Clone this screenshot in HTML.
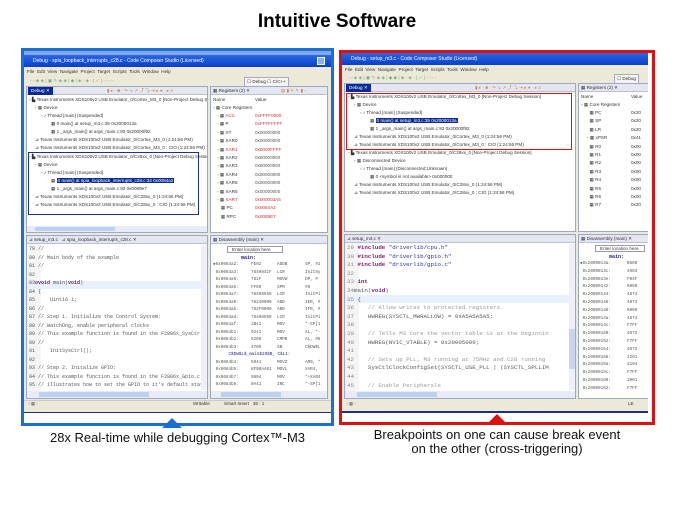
<!DOCTYPE html>
<html><head><meta charset="utf-8"><style>
*{margin:0;padding:0;box-sizing:border-box}
body{width:674px;height:506px;background:#fff;position:relative;overflow:hidden;font-family:"Liberation Sans",sans-serif}
.a{position:absolute}
.t{position:absolute;white-space:nowrap;font-size:4.6px;color:#333;line-height:8px}
.m{font-family:"Liberation Mono",monospace;font-size:5px;color:#555}
.win{position:absolute;background:#ece9d8;overflow:hidden}
.tb{position:absolute;left:0;right:0;top:0;height:12px;background:linear-gradient(#2a67e0,#0a3fc8);color:#fff;font-size:5px;line-height:12px;padding-left:9px;white-space:nowrap}
.pane{position:absolute;background:#fff;border:1px solid #9aa9c8;overflow:hidden}
.tab{position:absolute;left:0;right:0;top:0;height:8px;background:#e4e6f0;border-bottom:1px solid #b8c0d8}
.sel{background:#0a2b96;color:#fff}
.gut{position:absolute;top:8px;bottom:0;left:0;width:14px;background:#f4f4f4}
</style></head><body>
<div class="a" style="left:0;top:11px;width:674px;text-align:center;font-weight:bold;font-size:19px;color:#000">Intuitive Software</div>

<!-- LEFT -->
<div class="a" style="left:21px;top:48px;width:313px;height:378px;border:3px solid #1a6fd0"></div>
<div class="a" style="left:24px;top:51px;width:307px;height:5px;background:#7fa8e8"></div>
<div class="win" style="left:24px;top:55px;width:307px;height:358px">
 <div class="tb">Debug - spia_loopback_interrupts_c28.c - Code Composer Studio (Licensed)</div>
 <div class="a" style="right:6px;top:2px;width:8px;height:8px;background:#8ab0f0;border:1px solid #fff"></div>
 <div class="t" style="left:3px;top:13px">File&nbsp; Edit&nbsp; View&nbsp; Navigate&nbsp; Project&nbsp; Target&nbsp; Scripts&nbsp; Tools&nbsp; Window&nbsp; Help</div>
 <div class="t" style="left:6px;top:22px;color:#7a8">▫ ▫ ◈ ◈ | ▣ ✎ ◈ ◈ | ◆ | ◈ · ◈ · | ✓ | ◦ ◦ ◦ ◦</div>
 <div class="t" style="left:220px;top:22px;border:1px solid #aab;padding:0 2px;background:#f4f4f4">☐ Debug ☐ C/C++</div>
 <div class="pane" style="left:2px;top:31px;width:182px;height:147px">
  <div class="tab"><span class="t sel" style="left:1px;top:0;padding:0 3px">Debug ✕</span><span class="t" style="left:80px;top:0;color:#c84">▮ ▸ · ■ · ↷ ↘ ↗ ⤴ ⤵ ⇥ ▸ ● · ▸ ≡</span></div>
  <div class="t" style="left:2px;top:9px">▫ ▙ Texas Instruments XDS100v2 USB Emulator_0/Cortex_M3_0 [Non-Project Debug Session]</div>
  <div class="t" style="left:8px;top:17px">▫ ▦ Device</div>
  <div class="t" style="left:14px;top:25px">▫ ♪ Thread [main] (Suspended)</div>
  <div class="t" style="left:24px;top:33px">▦ 0 main() at setup_m3.c:35 0x2000013a</div>
  <div class="t" style="left:24px;top:41px">▦ 1 _args_main() at args_main.c:93 0x20000f92</div>
  <div class="t" style="left:8px;top:49px">⊿ Texas Instruments XDS100v2 USB Emulator_0/Cortex_M3_0 (1:24:56 PM)</div>
  <div class="t" style="left:8px;top:57px">⊿ Texas Instruments XDS100v2 USB Emulator_0/Cortex_M3_0 : CIO (1:24:56 PM)</div>
  <div class="a" style="left:1px;top:65px;width:171px;height:63px;border:1.5px solid #1c2f9a"></div>
  <div class="t" style="left:2px;top:66px">▫ ▙ Texas Instruments XDS100v2 USB Emulator_0/C28xx_0 [Non-Project Debug Session]</div>
  <div class="t" style="left:8px;top:74px">▫ ▦ Device</div>
  <div class="t" style="left:14px;top:82px">▫ ♪ Thread [main] (Suspended)</div>
  <div class="t" style="left:24px;top:90px">▦ <span class="sel" style="padding:0 1px">0 main() at spia_loopback_interrupts_c28.c:34 0x0084a2</span></div>
  <div class="t" style="left:24px;top:98px">▦ 1 _args_main() at args_main.c:93 0x0089e7</div>
  <div class="t" style="left:8px;top:106px">⊿ Texas Instruments XDS100v2 USB Emulator_0/C28xx_0 (1:24:56 PM)</div>
  <div class="t" style="left:8px;top:114px">⊿ Texas Instruments XDS100v2 USB Emulator_0/C28xx_0 : CIO (1:24:56 PM)</div>
  <div class="a" style="left:0;right:0;bottom:0;height:6px;background:#e8ecf6"><div class="a" style="left:8px;top:1px;width:80px;height:4px;background:#bcd0f0"></div></div>
 </div>
 <div class="pane" style="left:186px;top:31px;width:118px;height:147px">
  <div class="tab"><span class="t" style="left:2px;top:0">▦ Registers (2) ✕</span><span class="t" style="left:70px;top:0;color:#c84">▤ ▮ ✎ ✎ ▮ ▫</span></div>
  <div class="t" style="left:2px;top:9px">Name</div><div class="t" style="left:44px;top:9px">Value</div>
  <div class="t" style="left:2px;top:17px">▫ ▦ Core Registers</div>
  <div class="t" style="left:6px;top:25px;line-height:8.4px">▫ ▦ <span style="color:#c33">ACC</span><br>▫ ▦ P<br>▫ ▦ XT<br>▫ ▦ XAR0<br>▫ ▦ <span style="color:#c33">XAR1</span><br>▫ ▦ XAR2<br>▫ ▦ XAR3<br>▫ ▦ XAR4<br>▫ ▦ XAR5<br>▫ ▦ XAR6<br>▫ ▦ <span style="color:#c33">XAR7</span><br>&nbsp;&nbsp; ▦ PC<br>&nbsp;&nbsp; ▦ RPC</div>
  <div class="t" style="left:44px;top:25px;line-height:8.4px;color:#c33">0xFFFF0000<br>0xFFFFFFFF<br><span style="color:#555">0x00000000<br>0x00000000</span><br>0x0000FFFF<br><span style="color:#555">0x00000000<br>0x00000000<br>0x00000000<br>0x00000000<br>0x00000000</span><br>0x000003A5<br>0x0084A2<br>0x0089E7</div>
 </div>
 <div class="pane" style="left:2px;top:180px;width:182px;height:164px">
  <div class="tab"><span class="t" style="left:2px;top:0">⊿ setup_m3.c&nbsp;&nbsp; ⊿ spia_loopback_interrupts_c28.c ✕</span></div>
  <div class="gut"></div>
  <div class="a" style="left:0;right:0;top:45px;height:8px;background:#e8f0fc"></div>
  <div class="t m" style="left:2px;top:9px;line-height:8.5px">79 //<br>80 // Main body of the example<br>81 //<br>82<br>83<span style="color:#7a1a6a;font-weight:bold">⊖void</span> main(<span style="color:#7a1a6a;font-weight:bold">void</span>)<br>84 {<br>85&nbsp;&nbsp;&nbsp;&nbsp; Uint16 i;<br>86 //<br>87 // Step 1. Initialize the Control System:<br>88 // WatchDog, enable peripheral clocks<br>89 // This example function is found in the F2806x_SysCtrl<br>90 //<br>91&nbsp;&nbsp;&nbsp;&nbsp; InitSysCtrl();<br>92<br>93 // Step 2. Initalize GPIO:<br>94 // This example function is found in the F2806x_Gpio.c<br>95 // illustrates how to set the GPIO to it's default stat<br>96 // This example fills GP...</div>
  <div class="a" style="right:0;top:9px;width:6px;bottom:8px;background:#eef"></div>
  <div class="a" style="left:0;right:0;bottom:0;height:7px;background:#e8ecf6"><div class="a" style="left:12px;top:1px;width:110px;height:5px;background:#bcd0f0"></div></div>
 </div>
 <div class="pane" style="left:186px;top:180px;width:118px;height:164px">
  <div class="tab"><span class="t" style="left:2px;top:0">▦ Disassembly (main) ✕</span></div>
  <div class="a" style="left:16px;top:10px;width:56px;height:7px;border:1px solid #99a;background:#fff"><span class="t" style="left:4px;top:-1px">Enter location here</span></div>
  <div class="t m" style="left:30px;top:18px;color:#229;font-weight:bold">main:</div>
  <div class="t m" style="left:2px;top:25px;line-height:7.5px;font-size:4.3px">●0x0084a2:<br>&nbsp;0x0084a3:<br>&nbsp;0x0084a5:<br>&nbsp;0x0084a6:<br>&nbsp;0x0084a7:<br>&nbsp;0x0084a9:<br>&nbsp;0x0084ab:<br>&nbsp;0x0084ad:<br>&nbsp;0x0084af:<br>&nbsp;0x0084b1:<br>&nbsp;0x0084b2:<br>&nbsp;0x0084b3:<br><span style="color:#229">&nbsp;&nbsp;&nbsp;&nbsp;&nbsp;&nbsp;C$DW$L$_main$29$B, C$L1:</span><br>&nbsp;0x0084b4:<br>&nbsp;0x0084b5:<br>&nbsp;0x0084b7:<br>&nbsp;0x0084b8:</div>
  <div class="t m" style="left:40px;top:25px;line-height:7.5px;font-size:4.3px">FE02<br>7640841F<br>761F<br>FF69<br>76408559<br>76240000<br>762F0000<br>76408559<br>2B41<br>9241<br>5208<br>4709<br><br>5041<br>8F00A401<br>9694<br>0A41</div>
  <div class="t m" style="left:66px;top:25px;line-height:7.5px;font-size:4.3px">ADDB<br>LCR<br>MOVW<br>SPM<br>LCR<br>AND<br>AND<br>LCR<br>MOV<br>MOV<br>CMPB<br>SB<br><br>MOVZ<br>MOVL<br>MOV<br>INC</div>
  <div class="t m" style="left:94px;top:25px;line-height:7.5px;font-size:4.3px">SP, #2<br>InitSy<br>DP, #<br>#0<br>InitPi<br>IER, #<br>IFR, #<br>InitPi<br>*-SP[1<br>AL, *-<br>AL, #8<br>C$DW$L<br><br>AR0, *<br>XAR4,<br>*+XAR4<br>*-SP[1</div>
  <div class="a" style="left:0;right:0;bottom:0;height:7px;background:#e8ecf6"><div class="a" style="left:10px;top:1px;width:60px;height:5px;background:#bcd0f0"></div></div>
 </div>
 <div class="a" style="left:0;right:0;top:345px;height:10px;background:#ece9d8;border-top:1px solid #ccc"></div>
 <div class="t" style="left:4px;top:345px;color:#666">▫ ▦ ◦</div>
 <div class="t" style="left:169px;top:345px">Writable</div>
 <div class="t" style="left:200px;top:345px">Smart Insert&nbsp;&nbsp; 35 : 1</div>
 <div class="a" style="left:0;right:0;top:357px;height:1px;background:#1c2f7a"></div>
</div>
<div class="a" style="left:162px;top:418px;width:0;height:0;border-left:10px solid transparent;border-right:10px solid transparent;border-bottom:10px solid #1a6fd0"></div>
<div class="a" style="left:21px;top:430px;width:313px;text-align:center;font-size:13px;color:#111">28x Real-time while debugging Cortex™-M3</div>

<!-- RIGHT -->
<div class="a" style="left:339px;top:50px;width:316px;height:375px;border:3px solid #e01010"></div>
<div class="win" style="left:342px;top:53px;width:306px;height:360px">
 <div class="tb">Debug - setup_m3.c - Code Composer Studio (Licensed)</div>
 <div class="t" style="left:3px;top:13px">File&nbsp; Edit&nbsp; View&nbsp; Navigate&nbsp; Project&nbsp; Target&nbsp; Scripts&nbsp; Tools&nbsp; Window&nbsp; Help</div>
 <div class="t" style="left:6px;top:21px;color:#7a8">▫ ▫ ◈ ◈ | ▣ ✎ ◈ ◈ | ◆ ◆ | ◈ · ◈ · | ✓ | ◦ ◦ ◦ ◦</div>
 <div class="t" style="left:272px;top:21px;border:1px solid #aab;padding:0 2px;background:#f4f4f4">☐ Debug</div>
 <div class="pane" style="left:2px;top:30px;width:232px;height:149px">
  <div class="tab"><span class="t sel" style="left:1px;top:0;padding:0 3px">Debug ✕</span><span class="t" style="left:130px;top:0;color:#c84">▮ ▸ · ■ · ↷ ↘ ↗ ⤴ ⤵ ⇥ ▸ ● · ▸ ≡</span></div>
  <div class="a" style="left:1px;top:9px;width:226px;height:57px;border:1.5px solid #e01010"></div>
  <div class="t" style="left:3px;top:9px">▫ ▙ Texas Instruments XDS100v2 USB Emulator_0/Cortex_M3_0 [Non-Project Debug Session]</div>
  <div class="t" style="left:9px;top:17px">▫ ▦ Device</div>
  <div class="t" style="left:15px;top:25px">▫ ♪ Thread [main] (Suspended)</div>
  <div class="t" style="left:25px;top:33px">▦ <span class="sel" style="padding:0 1px">0 main() at setup_m3.c:35 0x2000013a</span></div>
  <div class="t" style="left:25px;top:41px">▦ 1 _args_main() at args_main.c:93 0x20000f92</div>
  <div class="t" style="left:9px;top:49px">⊿ Texas Instruments XDS100v2 USB Emulator_0/Cortex_M3_0 (1:24:56 PM)</div>
  <div class="t" style="left:9px;top:57px">⊿ Texas Instruments XDS100v2 USB Emulator_0/Cortex_M3_0 : CIO (1:24:56 PM)</div>
  <div class="t" style="left:3px;top:65px">▫ ▙ Texas Instruments XDS100v2 USB Emulator_0/C28xx_0 [Non-Project Debug Session]</div>
  <div class="t" style="left:9px;top:73px">▫ ▦ Disconnected Device</div>
  <div class="t" style="left:15px;top:81px">▫ ♪ Thread [main] (Disconnected:Unknown)</div>
  <div class="t" style="left:25px;top:89px">▦ 0 &lt;symbol is not available&gt; 0x000000</div>
  <div class="t" style="left:9px;top:97px">⊿ Texas Instruments XDS100v2 USB Emulator_0/C28xx_0 (1:24:56 PM)</div>
  <div class="t" style="left:9px;top:105px">⊿ Texas Instruments XDS100v2 USB Emulator_0/C28xx_0 : CIO (1:24:56 PM)</div>
 </div>
 <div class="pane" style="left:236px;top:30px;width:72px;height:149px">
  <div class="tab"><span class="t" style="left:2px;top:0">▦ Registers (2) ✕</span></div>
  <div class="t" style="left:2px;top:9px">Name</div><div class="t" style="left:52px;top:9px">Value</div>
  <div class="t" style="left:2px;top:17px">▫ ▦ Core Registers</div>
  <div class="t" style="left:8px;top:25px;line-height:8.4px">&nbsp; ▦ PC<br>&nbsp; ▦ SP<br>&nbsp; ▦ LR<br>▫ ▦ xPSR<br>&nbsp; ▦ R0<br>&nbsp; ▦ R1<br>&nbsp; ▦ R2<br>&nbsp; ▦ R3<br>&nbsp; ▦ R4<br>&nbsp; ▦ R5<br>&nbsp; ▦ R6<br>&nbsp; ▦ R7</div>
  <div class="t" style="left:52px;top:25px;line-height:8.4px">0x20<br>0x20<br>0x20<br>0x41<br>0x00<br>0x00<br>0x00<br>0x00<br>0x00<br>0x00<br>0x00<br>0x20</div>
 </div>
 <div class="pane" style="left:2px;top:181px;width:232px;height:165px">
  <div class="tab"><span class="t" style="left:2px;top:0">⊿ setup_m3.c ✕</span></div>
  <div class="gut"></div>
  <div class="a" style="left:0;right:0;top:60px;height:8px;background:#e8f0fc"></div>
  <div class="t m" style="left:2px;top:9px;line-height:8.6px;font-size:5.8px"><span style="color:#888">29</span> <b style="color:#7a1a6a">#include</b> <span style="color:#2233aa">"driverlib/cpu.h"</span><br><span style="color:#888">30</span> <b style="color:#7a1a6a">#include</b> <span style="color:#2233aa">"driverlib/gpio.h"</span><br><span style="color:#888">31</span> <b style="color:#7a1a6a">#include</b> <span style="color:#2233aa">"driverlib/gpio.c"</span><br><span style="color:#888">32</span><br><span style="color:#888">33</span> <b style="color:#7a1a6a">int</b><br><span style="color:#888">34</span>main(<b style="color:#7a1a6a">void</b>)<br><span style="color:#888">35</span> {<br><span style="color:#888">36</span>&nbsp;&nbsp;&nbsp; <span style="color:#999">// Allow writes to protected registers.</span><br><span style="color:#888">37</span>&nbsp;&nbsp;&nbsp; HWREG(SYSCTL_MWRALLOW) = 0xA5A5A5A5;<br><span style="color:#888">38</span><br><span style="color:#888">39</span>&nbsp;&nbsp;&nbsp; <span style="color:#999">// Tells M3 Core the vector table is at the beginnin</span><br><span style="color:#888">40</span>&nbsp;&nbsp;&nbsp; HWREG(NVIC_VTABLE) = 0x20005000;<br><span style="color:#888">41</span><br><span style="color:#888">42</span>&nbsp;&nbsp;&nbsp; <span style="color:#999">// Sets up PLL, M3 running at 75MHz and C28 running</span><br><span style="color:#888">43</span>&nbsp;&nbsp;&nbsp; SysCtlClockConfigSet(SYSCTL_USE_PLL | (SYSCTL_SPLLIM<br><span style="color:#888">44</span><br><span style="color:#888">45</span>&nbsp;&nbsp;&nbsp; <span style="color:#999">// Enable Peripherals</span><br><span style="color:#888">46</span>&nbsp;&nbsp;&nbsp; SysCtlPeripheralEnable(SYSCTL_PERIPH_GPIOF);</div>
  <div class="a" style="right:0;top:9px;width:6px;bottom:8px;background:#eef"><div class="a" style="left:0;top:85px;width:6px;height:40px;background:#c8d4f0"></div></div>
  <div class="a" style="left:0;right:0;bottom:0;height:7px;background:#e8ecf6"><div class="a" style="left:12px;top:1px;width:80px;height:5px;background:#bcd0f0"></div></div>
 </div>
 <div class="pane" style="left:236px;top:181px;width:72px;height:165px">
  <div class="tab"><span class="t" style="left:2px;top:0">▦ Disassembly (main) ✕</span></div>
  <div class="a" style="left:16px;top:10px;width:50px;height:7px;border:1px solid #99a;background:#fff"><span class="t" style="left:4px;top:-1px">Enter location here</span></div>
  <div class="t m" style="left:30px;top:18px;color:#229;font-weight:bold">main:</div>
  <div class="t m" style="left:1px;top:25px;line-height:7.8px;font-size:4.3px">●0x2000013a:<br>&nbsp;0x2000013c:<br>&nbsp;0x2000013e:<br>&nbsp;0x20000142:<br>&nbsp;0x20000144:<br>&nbsp;0x20000146:<br>&nbsp;0x20000148:<br>&nbsp;0x2000014a:<br>&nbsp;0x2000014c:<br>&nbsp;0x20000150:<br>&nbsp;0x20000152:<br>&nbsp;0x20000154:<br>&nbsp;0x20000158:<br>&nbsp;0x2000015a:<br>&nbsp;0x2000015c:<br>&nbsp;0x20000160:<br>&nbsp;0x20000162:</div>
  <div class="t m" style="left:48px;top:25px;line-height:7.8px;font-size:4.3px">B508<br>4903<br>F04F<br>6008<br>4874<br>4973<br>6009<br>4874<br>F7FF<br>4873<br>F7FF<br>4873<br>2201<br>2104<br>F7FF<br>2001<br>F7FF</div>
 </div>
 <div class="t" style="left:4px;top:347px;color:#666">▫ ▦ ◦</div>
 <div class="t" style="left:286px;top:347px">LE</div>
 <div class="a" style="left:0;right:0;top:358px;height:2px;background:#1c2f7a"></div>
</div>
<div class="a" style="left:486px;top:414px;width:0;height:0;border-left:11px solid transparent;border-right:11px solid transparent;border-bottom:11px solid #e01010"></div>
<div class="a" style="left:339px;top:428px;width:316px;text-align:center;font-size:13px;line-height:14px;color:#111">Breakpoints on one can cause break event<br>on the other (cross-triggering)</div>
</body></html>
